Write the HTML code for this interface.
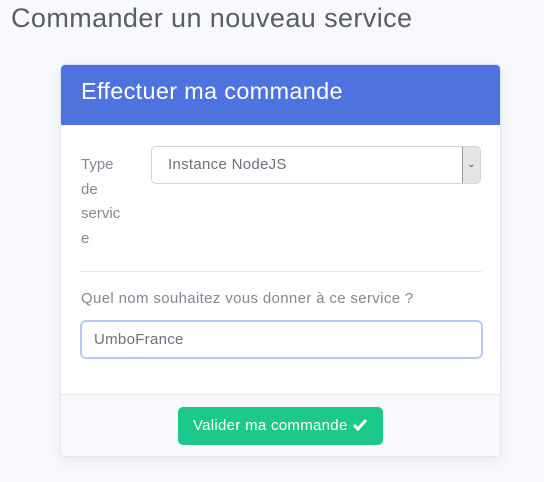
<!DOCTYPE html><html><head><style>
body{margin:0;width:544px;height:482px;background:#f8f9fc;font-family:"Liberation Sans",sans-serif;color:#858796;position:relative;overflow:hidden}
h1{position:absolute;left:11px;top:3px;margin:0;font-weight:400;font-size:27px;letter-spacing:0.4px;color:#5a5c69}
.card{position:absolute;left:60px;top:64px;width:441px;height:393px;background:#fff;border:1px solid #e3e6f0;border-radius:5px;box-sizing:border-box;overflow:hidden;box-shadow:0 4px 12px rgba(58,59,69,.08)}
.hd{height:60px;background:#4e73df;color:#fff;font-size:23.5px;letter-spacing:0.3px;line-height:52px;padding-left:20px}
.abs{position:absolute}
.lab{left:20px;top:88px;font-size:15px;line-height:24.5px;width:50px}
.sel{left:90px;top:81px;width:330px;height:38px;border:1px solid #d1d3e2;border-radius:5px;box-sizing:border-box;font-size:15px;letter-spacing:0.3px;color:#6e707e;line-height:36px;padding-left:16px}
.arr{position:absolute;right:0;top:0;width:17px;height:36px;background:#e4e4e4;border-left:1px solid #999;font-size:10px;text-align:center;color:#555}
.hr{left:20px;top:206px;width:401px;border-top:1px solid #e3e6f0}
.q{left:20px;top:225px;font-size:15px;letter-spacing:0.35px}
.in{left:19px;top:255px;width:403px;height:39px;border:2px solid #bac8f3;border-radius:6px;box-sizing:border-box;font-size:15px;letter-spacing:0.3px;color:#6e707e;line-height:35px;padding-left:12px}
.ft{left:0;top:329px;width:441px;height:64px;background:#f8f9fc;border-top:1px solid #e3e6f0}
.btn{left:117px;top:342px;width:205px;height:38px;background:#1cc88a;border-radius:5px;color:#fff;font-size:15px;letter-spacing:0.3px;line-height:38px;text-align:center}
</style></head><body>
<h1>Commander un nouveau service</h1>
<div class="card">
<div class="hd">Effectuer ma commande</div>
<div class="abs lab">Type de servic e</div>
<div class="abs sel">Instance NodeJS<div class="arr">⌄</div></div>
<div class="abs hr"></div>
<div class="abs q">Quel nom souhaitez vous donner à ce service ?</div>
<div class="abs in">UmboFrance</div>
<div class="abs ft"></div>
<div class="abs btn">Valider ma commande <svg width="16" height="13" viewBox="0 0 16 13" style="vertical-align:-1px"><path d="M2 7l4 4 8-9" fill="none" stroke="#fff" stroke-width="3"/></svg></div>
</div>
</body></html>
